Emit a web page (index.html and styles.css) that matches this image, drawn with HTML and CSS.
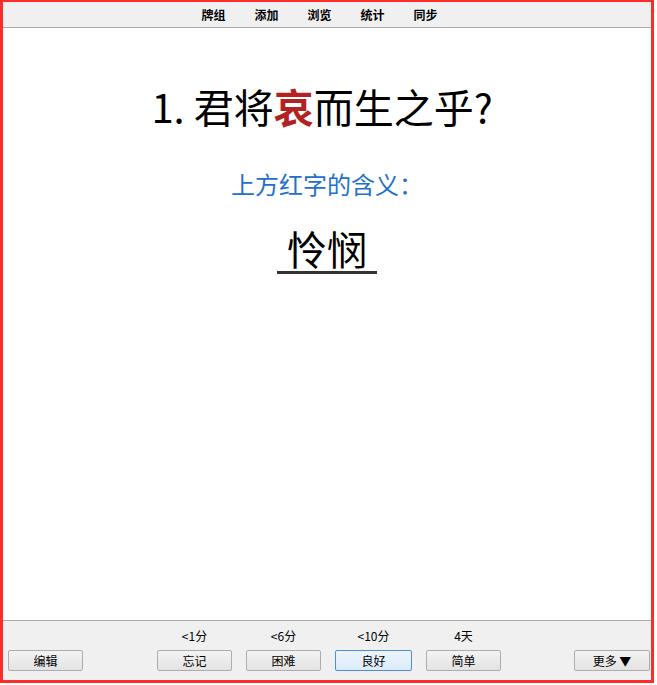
FILE: index.html
```html
<!DOCTYPE html>
<html>
<head>
<meta charset="utf-8">
<title>Anki 复习</title>
<link rel="stylesheet" href="styles.css">
</head>

<body>

<div class="frame">
  <section class="toolbar">
    <a class="nav-item">牌组</a>
    <a class="nav-item">添加</a>
    <a class="nav-item">浏览</a>
    <a class="nav-item">统计</a>
    <a class="nav-item">同步</a>
  </section>

  <section class="card">
    <div class="question">1. 君将<b class="cloze">哀</b>而生之乎?</div>
    <div class="prompt">上方红字的含义：</div>
    <div class="answer"><span class="answer-text">怜悯</span></div>
  </section>

  <section class="bottom-bar">
    <div class="slot">
      <span class="due">&nbsp;</span>
      <button type="button">编辑</button>
    </div>
    <div class="ease-buttons">
      <div class="slot">
        <span class="due">&lt;1分</span>
        <button type="button">忘记</button>
      </div>
      <div class="slot">
        <span class="due">&lt;6分</span>
        <button type="button">困难</button>
      </div>
      <div class="slot">
        <span class="due">&lt;10分</span>
        <button type="button" class="default">良好</button>
      </div>
      <div class="slot">
        <span class="due">4天</span>
        <button type="button">简单</button>
      </div>
    </div>
    <div class="slot slot-right">
      <span class="due">&nbsp;</span>
      <button type="button" class="more">更多&nbsp;▼</button>
    </div>
  </section>
</div>

</body>
</html>
```

FILE: styles.css
```css
body {
  background-color: #fff;
  color: #000;
  font-family: 'Noto Sans CJK SC', 'Noto Sans', sans-serif;
  margin: 0;
  padding: 0;
}

.frame {
  border-color: #ff2a2a;
  border-style: solid;
  border-width: 2px 3px 3px 3px;
  box-sizing: border-box;
  display: flex;
  flex-direction: column;
  height: 683px;
  width: 654px;
}


/* Top toolbar */
.toolbar {
  align-items: center;
  background-color: #f0f0f0;
  border-bottom: 1px solid #a9a9a9;
  display: flex;
  gap: 29px;
  height: 25px;
  justify-content: center;
  padding-right: 15px;
}
.nav-item {
  color: #000;
  font-size: 12px;
  font-weight: bold;
  line-height: 14px;
}


/* Card content */
.card {
  flex: 1;
  text-align: center;
}
.question {
  font-size: 40px;
  line-height: 48px;
  margin-top: 54px;
  padding-right: 10px;
}
.cloze {
  color: #b22222;
}
.prompt {
  color: #2270cc;
  font-size: 24px;
  line-height: 32px;
  margin-top: 38px;
}
.answer {
  margin-top: 25px;
}
.answer-text {
  border-bottom: 3px solid #333;
  display: inline-block;
  font-size: 40px;
  line-height: 46px;
  padding: 0 10px;
}


/* Answer buttons */
.bottom-bar {
  background-color: #f0f0f0;
  border-top: 1px solid #a9a9a9;
  display: flex;
  height: 59px;
  padding: 0 1px 0 5px;
}
.ease-buttons {
  display: flex;
  gap: 14px;
  margin-left: 74px;
}
.slot {
  align-items: center;
  display: flex;
  flex-direction: column;
  padding-top: 7px;
}
.slot-right {
  margin-left: auto;
}
.due {
  font-size: 12px;
  height: 15px;
  line-height: 15px;
  margin-bottom: 7px;
}
.slot button {
  background-color: #e6e6e6;
  background-image: linear-gradient(#f3f3f3, #e3e3e3);
  border: 1px solid #adadad;
  border-radius: 2px;
  color: #000;
  font-family: 'Noto Sans CJK SC', sans-serif;
  font-size: 12px;
  height: 21px;
  line-height: 17px;
  padding: 0;
  width: 75px;
}
.slot button.default {
  background-image: linear-gradient(#ecf4fc, #dcecfc);
  border-color: #4d8fd0;
  width: 77px;
}
.slot button.more {
  width: 76px;
}
```
